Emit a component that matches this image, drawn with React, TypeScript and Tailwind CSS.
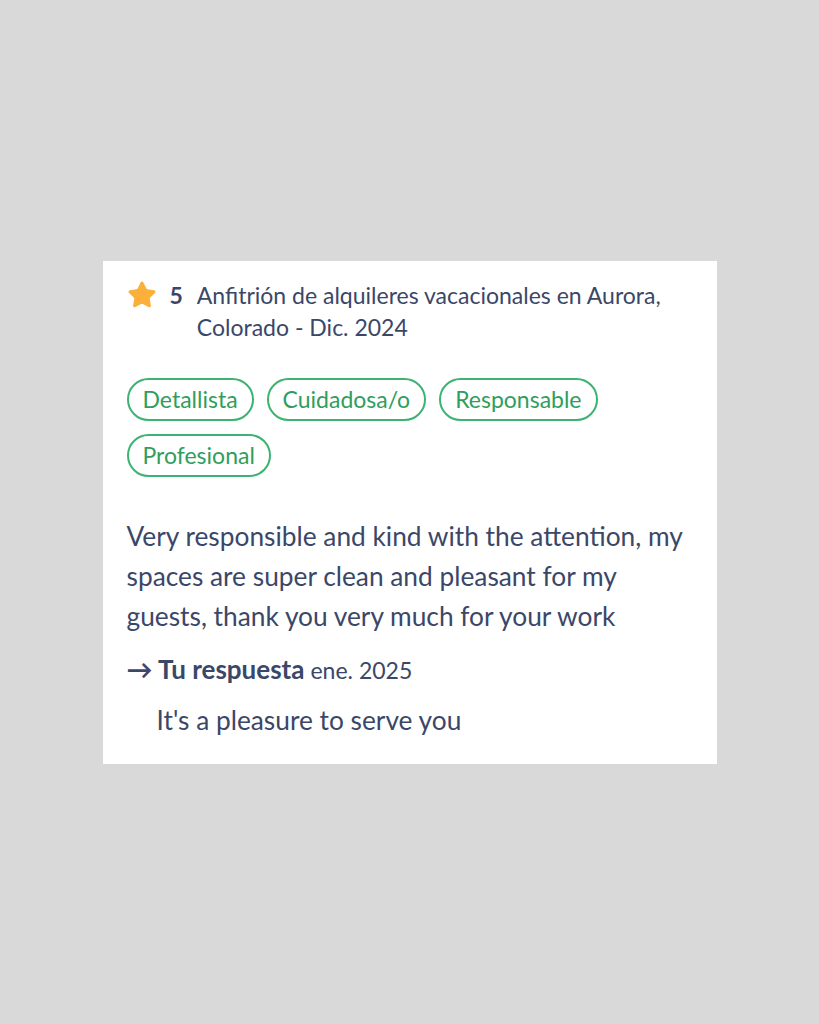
import { Star } from 'lucide-react';

const tags = ['Detallista', 'Cuidadosa/o', 'Responsable', 'Profesional'];

export default function App() {
  return (
    <div
      className="min-h-screen w-full bg-[#d9d9d9] flex items-center justify-center"
      style={{ fontFamily: 'Lato, "Noto Sans", sans-serif' }}
    >
      <div className="w-[614px] bg-white px-6 pt-[18px] pb-[27px] text-[#3b4768]">
        <div className="flex items-start">
          <Star className="w-[30px] h-[30px] mt-[1px] shrink-0 text-[#fbb03b] fill-[#fbb03b]" strokeWidth={1.5} />
          <span className="ml-[13px] text-[23px] leading-[32px] font-bold">5</span>
          <span className="ml-[14px] text-[23px] leading-[32px]">
            Anfitrión de alquileres vacacionales en Aurora, Colorado - Dic. 2024
          </span>
        </div>

        <div className="mt-[35px] flex flex-wrap gap-x-[13px] gap-y-[13px]">
          {tags.map((t) => (
            <span
              key={t}
              className="h-[43px] px-[14px] flex items-center rounded-full border-2 border-[#3cb371] text-[#2f9e5c] text-[23px]"
            >
              {t}
            </span>
          ))}
        </div>

        <p className="mt-[39px] text-[26.3px] leading-[40px]">
          Very responsible and kind with the attention, my spaces are super clean and pleasant for my guests, thank you very much for your work
        </p>

        <div className="mt-[14px] flex items-baseline gap-[6px]">
          <span className="text-[26px] font-bold">→ Tu respuesta</span>
          <span className="text-[23px]">ene. 2025</span>
        </div>

        <p className="mt-[14px] pl-[30px] text-[26.3px] leading-[34px]">It's a pleasure to serve you</p>
      </div>
    </div>
  );
}
